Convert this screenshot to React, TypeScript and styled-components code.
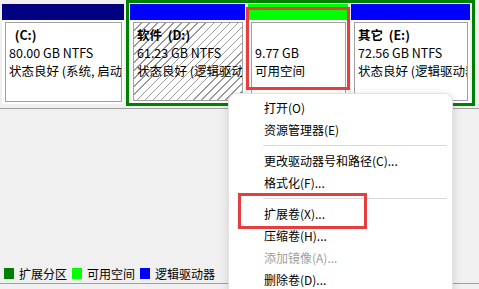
import styled, { createGlobalStyle } from 'styled-components'

const GlobalStyle = createGlobalStyle`
  body {
    margin: 0;
    background: #f0f0f0;
  }
`

type Part = {
  name?: string
  drive?: string
  size: string
  status: string
  bar: string
  width: number
  hatched?: boolean
}

const logical: Part[] = [
  { name: '软件', drive: '(D:)', size: '61.23 GB NTFS', status: '状态良好 (逻辑驱动器)', bar: '#0000ff', width: 115, hatched: true },
  { size: '9.77 GB', status: '可用空间', bar: '#00ff00', width: 100 },
  { name: '其它', drive: '(E:)', size: '72.56 GB NTFS', status: '状态良好 (逻辑驱动器)', bar: '#0000ff', width: 119 },
]

const menu: ({ label: string; disabled?: boolean } | 'sep')[] = [
  { label: '打开(O)' },
  { label: '资源管理器(E)' },
  'sep',
  { label: '更改驱动器号和路径(C)...' },
  { label: '格式化(F)...' },
  'sep',
  { label: '扩展卷(X)...' },
  { label: '压缩卷(H)...' },
  { label: '添加镜像(A)...', disabled: true },
  { label: '删除卷(D)...' },
]

const legend = [
  { color: '#008000', label: '扩展分区' },
  { color: '#00ff00', label: '可用空间' },
  { color: '#0000ff', label: '逻辑驱动器' },
]

function Partition({ part }: { part: Part }) {
  return (
    <PartBox $width={part.width}>
      <Bar $color={part.bar} />
      <Frame>
        <Body $hatched={part.hatched}>
          <Name>{part.name ? `${part.name}  ${part.drive}` : part.drive ?? ' '}</Name>
          <Line>{part.size}</Line>
          <Line>{part.status}</Line>
        </Body>
      </Frame>
    </PartBox>
  )
}

export default function App() {
  return (
    <>
      <GlobalStyle />
      <Page>
        <DiskRow>
          <Primary>
            <Partition part={{ drive: '  (C:)', size: '80.00 GB NTFS', status: '状态良好 (系统, 启动, 页面文件)', bar: '#000080', width: 122 }} />
          </Primary>
          <Extended>
            {logical.map((p, i) => <Partition key={i} part={p} />)}
          </Extended>
        </DiskRow>
        <Divider />
        <Legend>
          {legend.map(l => (
            <LegendItem key={l.label}>
              <Swatch $color={l.color} />
              {l.label}
            </LegendItem>
          ))}
        </Legend>

        <Menu>
          {menu.map((m, i) => m === 'sep'
            ? <Separator key={i} />
            : <MenuItem key={i} $disabled={m.disabled}>{m.label}</MenuItem>)}
        </Menu>

        <Highlight $x={246} $y={7} $w={104} $h={83} />
        <Highlight $x={238} $y={193} $w={129} $h={36} />
      </Page>
    </>
  )
}

const Page = styled.div`
  position: relative;
  width: 479px;
  height: 289px;
  overflow: hidden;
  display: flex;
  flex-direction: column;
  background: #f0f0f0;
  font-family: 'Noto Sans CJK SC', 'Noto Sans', sans-serif;
  font-size: 12px;
  color: #000;
`

const DiskRow = styled.div`
  display: flex;
  height: 106px;
  padding-left: 2px;
  gap: 2px;
`

const Primary = styled.div`
  display: flex;
  padding: 4px 0 2px;
`

const Extended = styled.div`
  display: flex;
  gap: 3px;
  width: 349px;
  box-sizing: border-box;
  border: 3px solid #008000;
  padding: 1px 2px 0 1px;
`

const PartBox = styled.div<{ $width: number }>`
  display: flex;
  flex-direction: column;
  width: ${({ $width }) => $width}px;
  flex: none;
`

const Bar = styled.div<{ $color: string }>`
  height: 16px;
  background: ${({ $color }) => $color};
`

const Frame = styled.div`
  flex: 1;
  display: flex;
  background: #fff;
  padding: 2px 2px 2px 3px;
  min-height: 0;
`

const Body = styled.div<{ $hatched?: boolean }>`
  flex: 1;
  min-width: 0;
  border: 1px solid #a0a0a0;
  padding: 3px 3px 0 3px;
  overflow: hidden;
  background: #fff;
  font-size: 12.5px;
  ${({ $hatched }) => $hatched && `
    background: repeating-linear-gradient(135deg, #fff 0 4.6px, #9a9a9a 4.6px 5.7px);
  `}
`

const Line = styled.div`
  height: 18px;
  line-height: 18px;
  white-space: nowrap;
`

const Name = styled(Line)`
  font-weight: bold;
  white-space: pre;
`

const Divider = styled.div`
  margin-top: 2px;
  height: 1px;
  background: #a0a0a0;
`

const Legend = styled.div`
  margin-top: auto;
  margin-bottom: 5px;
  height: 20px;
  display: flex;
  align-items: center;
  gap: 5px;
  padding-left: 4px;
  border-bottom: 1px solid #a0a0a0;
`

const LegendItem = styled.div`
  display: flex;
  align-items: center;
  gap: 5px;
  white-space: nowrap;
`

const Swatch = styled.span<{ $color: string }>`
  width: 10px;
  height: 11px;
  background: ${({ $color }) => $color};
`

const Menu = styled.div`
  position: absolute;
  left: 228px;
  top: 93px;
  width: 225px;
  height: 210px;
  box-sizing: border-box;
  padding-top: 3px;
  background: #fff;
  border: 1px solid #e2e2e2;
  border-radius: 8px;
  box-shadow: 0 2px 8px rgba(0, 0, 0, 0.14);
`

const MenuItem = styled.div<{ $disabled?: boolean }>`
  height: 22px;
  line-height: 22px;
  padding-left: 35px;
  white-space: nowrap;
  color: ${({ $disabled }) => ($disabled ? '#a0a0a0' : '#000')};
`

const Separator = styled.div`
  height: 9px;
  margin: 0 5px 0 34px;
  display: flex;
  align-items: center;

  &::after {
    content: '';
    flex: 1;
    height: 1px;
    background: #d9d9d9;
  }
`

const Highlight = styled.div<{ $x: number; $y: number; $w: number; $h: number }>`
  position: absolute;
  left: ${({ $x }) => $x}px;
  top: ${({ $y }) => $y}px;
  width: ${({ $w }) => $w}px;
  height: ${({ $h }) => $h}px;
  box-sizing: border-box;
  border: 3px solid #e53e3e;
`
